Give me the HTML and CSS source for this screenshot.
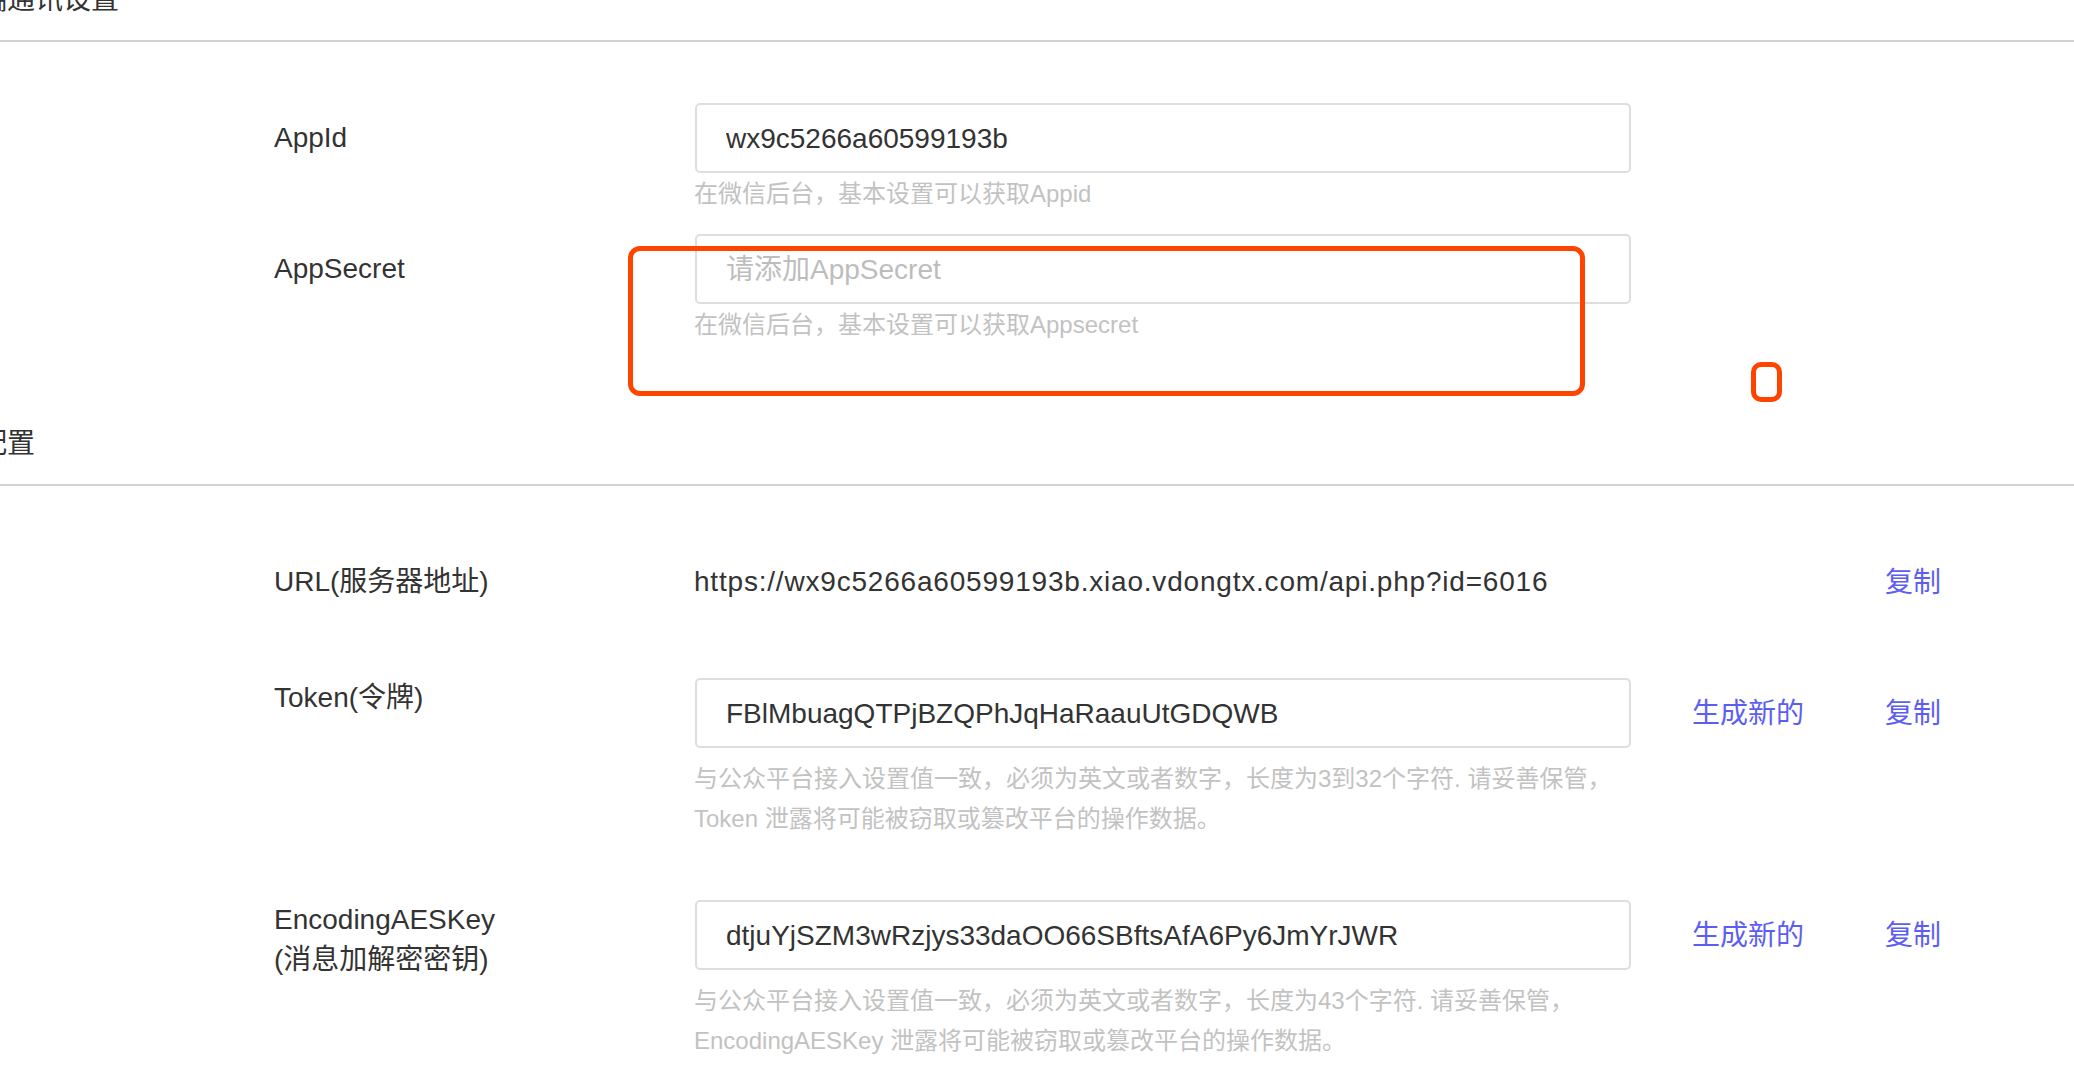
FILE: index.html
```html
<!DOCTYPE html>
<html lang="zh-CN">
<head>
<meta charset="utf-8">
<title>服务器配置</title>
<link rel="stylesheet" href="styles.css">
</head>
<body>
<div class="page">
  <section class="sec">
    <h2 class="sec-title"><span class="sec-title-text">服务器端通讯设置</span></h2>
    <div class="form form-basic">
      <div class="row">
        <div class="label label-mid">AppId</div>
        <div class="field">
          <input class="input" type="text" value="wx9c5266a60599193b" readonly>
          <p class="help help-tight">在微信后台，基本设置可以获取Appid</p>
        </div>
      </div>
      <div class="row">
        <div class="label label-mid">AppSecret</div>
        <div class="field">
          <input class="input" type="text" placeholder="请添加AppSecret">
          <p class="help help-tight">在微信后台，基本设置可以获取Appsecret</p>
        </div>
      </div>
    </div>
  </section>

  <section class="sec">
    <h2 class="sec-title"><span class="sec-title-text">服务器配置</span></h2>
    <div class="form form-server">
      <div class="row">
        <div class="label label-mid">URL(服务器地址)</div>
        <div class="field value">https://wx9c5266a60599193b.xiao.vdongtx.com/api.php?id=6016</div>
        <div class="action"></div>
        <a class="link">复制</a>
      </div>
      <div class="row">
        <div class="label">Token(令牌)</div>
        <div class="field">
          <input class="input" type="text" value="FBlMbuagQTPjBZQPhJqHaRaauUtGDQWB" readonly>
          <p class="help">与公众平台接入设置值一致，必须为英文或者数字，长度为3到32个字符. 请妥善保管，<br>Token 泄露将可能被窃取或篡改平台的操作数据。</p>
        </div>
        <div class="action"><a class="link">生成新的</a></div>
        <a class="link">复制</a>
      </div>
      <div class="row">
        <div class="label">EncodingAESKey<br>(消息加解密密钥)</div>
        <div class="field">
          <input class="input" type="text" value="dtjuYjSZM3wRzjys33daOO66SBftsAfA6Py6JmYrJWR" readonly>
          <p class="help">与公众平台接入设置值一致，必须为英文或者数字，长度为43个字符. 请妥善保管，<br>EncodingAESKey 泄露将可能被窃取或篡改平台的操作数据。</p>
        </div>
        <div class="action"><a class="link">生成新的</a></div>
        <a class="link">复制</a>
      </div>
    </div>
  </section>
</div>

<div class="mark mark-box"></div>
<div class="mark mark-small"></div>
</body>
</html>
```

FILE: styles.css
```css
html {
  overflow: hidden;
}

body {
  margin: 0;
  background: #ffffff;
  color: #333333;
  font-family: "Liberation Sans", "Noto Sans CJK SC", sans-serif;
  font-size: 28px;
}

.page {
  margin-top: -20px;
}

.sec-title {
  margin: 0;
  font-size: 28px;
  font-weight: normal;
  line-height: 40px;
  height: 40px;
  padding-bottom: 20px;
  border-bottom: 2px solid #d2d2d2;
  color: #333333;
  text-indent: -105px;
  white-space: nowrap;
}

.form {
  display: flex;
  flex-direction: column;
  padding-left: 274px;
}

.form-basic {
  padding-top: 61px;
  padding-bottom: 79px;
  gap: 20px;
}

.form-server {
  padding-top: 61px;
  gap: 61px;
}

.row {
  display: grid;
  grid-template-columns: 421px 936px 254px auto;
  align-items: start;
}

.label {
  line-height: 40px;
  color: #333333;
  white-space: nowrap;
}

.label-mid {
  line-height: 70px;
}

.field {
  display: flex;
  flex-direction: column;
}

.value {
  line-height: 70px;
  margin-left: -1px;
  letter-spacing: 0.8px;
  white-space: nowrap;
  color: #333333;
}

.input {
  box-sizing: border-box;
  width: 936px;
  height: 70px;
  margin: 0;
  padding: 2px 29px 0;
  border: 2px solid #dedede;
  border-radius: 5px;
  background: #ffffff;
  font-family: "Liberation Sans", "Noto Sans CJK SC", sans-serif;
  font-size: 28px;
  color: #333333;
  outline: none;
}

.input::placeholder {
  color: #bdbdbd;
}

.help {
  margin: 11px 0 0 -1px;
  font-size: 24px;
  line-height: 40px;
  color: #c2c2c2;
  white-space: nowrap;
}

.help-tight {
  margin-top: 1px;
}

.action {
  padding-left: 61px;
}

.link {
  display: block;
  box-sizing: border-box;
  height: 70px;
  padding-top: 1px;
  line-height: 70px;
  color: #5c5ef2;
  cursor: pointer;
  white-space: nowrap;
}

.mark {
  position: absolute;
  box-sizing: border-box;
  border: 5px solid #ff4400;
}

.mark-box {
  left: 628px;
  top: 246px;
  width: 957px;
  height: 150px;
  border-radius: 12px;
}

.mark-small {
  left: 1751px;
  top: 362px;
  width: 31px;
  height: 40px;
  border-radius: 10px;
}
```
